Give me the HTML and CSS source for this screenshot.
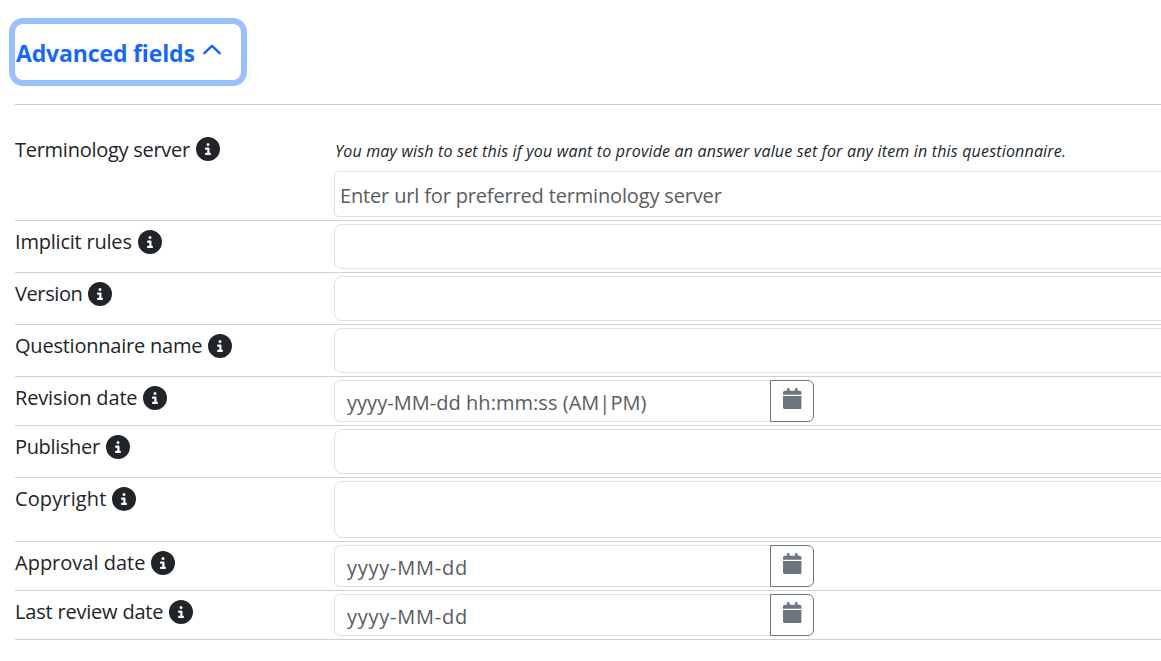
FILE: index.html
```
<!DOCTYPE html>
<html lang="en">
<head>
<meta charset="utf-8">
<title>Advanced fields</title>
<link rel="stylesheet" href="styles.css">
</head>
<body>
<svg width="0" height="0" class="defs">
  <symbol id="info" viewBox="0 0 512 512"><path d="M256 512A256 256 0 1 0 256 0a256 256 0 1 0 0 512zM216 336h24V272H216c-13.3 0-24-10.7-24-24s10.7-24 24-24h48c13.3 0 24 10.7 24 24v88h8c13.3 0 24 10.7 24 24s-10.7 24-24 24H216c-13.3 0-24-10.7-24-24s10.7-24 24-24zm40-208a32 32 0 1 1 0 64 32 32 0 1 1 0-64z"/></symbol>
  <symbol id="calendar" viewBox="0 0 448 512"><path d="M96 32V64H48C21.5 64 0 85.5 0 112v48H448V112c0-26.5-21.5-48-48-48H352V32c0-17.7-14.3-32-32-32s-32 14.3-32 32V64H160V32c0-17.7-14.3-32-32-32S96 14.3 96 32zM448 192H0V464c0 26.5 21.5 48 48 48H400c26.5 0 48-21.5 48-48V192z"/></symbol>
</svg>
<main class="panel">
  <button class="toggle"><span class="toggle-text">Advanced fields</span><svg class="chevron" viewBox="0 0 20 12"><path d="M2.4 9.2 10 1.8l7.6 7.4"/></svg></button>
  <div class="rule"></div>
  <div class="row row-first">
    <div class="label"><span class="t-term">Terminology server</span><svg class="info"><use href="#info"/></svg></div>
    <div class="field">
      <div class="help">You may wish to set this if you want to provide an answer value set for any item in this questionnaire.</div>
      <div class="input input-url"><span class="t-url">Enter url for preferred terminology server</span></div>
    </div>
  </div>
  <div class="row"><div class="label"><span class="t-impl">Implicit rules</span><svg class="info"><use href="#info"/></svg></div><div class="field"><div class="input"></div></div></div>
  <div class="row"><div class="label"><span class="t-ver">Version</span><svg class="info"><use href="#info"/></svg></div><div class="field"><div class="input"></div></div></div>
  <div class="row"><div class="label"><span class="t-name">Questionnaire name</span><svg class="info"><use href="#info"/></svg></div><div class="field"><div class="input"></div></div></div>
  <div class="row"><div class="label"><span class="t-rev">Revision date</span><svg class="info"><use href="#info"/></svg></div><div class="field date"><div class="date-input"><span class="t-datetime">yyyy-MM-dd hh:mm:ss (AM|PM)</span></div><button class="date-button"><svg class="calendar"><use href="#calendar"/></svg></button></div></div>
  <div class="row"><div class="label"><span class="t-pub">Publisher</span><svg class="info"><use href="#info"/></svg></div><div class="field"><div class="input"></div></div></div>
  <div class="row"><div class="label"><span class="t-copy">Copyright</span><svg class="info"><use href="#info"/></svg></div><div class="field"><div class="input input-area"></div></div></div>
  <div class="row"><div class="label"><span class="t-app">Approval date</span><svg class="info"><use href="#info"/></svg></div><div class="field date"><div class="date-input"><span class="t-date">yyyy-MM-dd</span></div><button class="date-button"><svg class="calendar"><use href="#calendar"/></svg></button></div></div>
  <div class="row"><div class="label"><span class="t-last">Last review date</span><svg class="info"><use href="#info"/></svg></div><div class="field date"><div class="date-input"><span class="t-date">yyyy-MM-dd</span></div><button class="date-button"><svg class="calendar"><use href="#calendar"/></svg></button></div></div>
</main>
</body>
</html>
```
FILE: styles.css
```
* { box-sizing: border-box; }
body { margin: 0; background: #fff; color: #212529; font-family: "Open Sans", "Noto Sans", sans-serif; font-size: 20px; overflow: hidden; }
.defs { display: block; }
.panel { padding: 18px 0 0 15px; }
.toggle { display: flex; align-items: flex-start; width: 238px; height: 68px; margin: 0 0 0 -6px; padding: 13px 0 0 1px; border: 6px solid #9ac0fe; border-radius: 14px; background: #fff; color: #1769f5; font: bold 23px/32px "Open Sans", "Noto Sans", sans-serif; letter-spacing: -0.15px; white-space: nowrap; }
.toggle-text { width: 185.5px; text-align: left; }
.chevron { width: 20px; height: 12px; margin-top: 6.5px; flex: none; fill: none; stroke: currentColor; stroke-width: 2.5; stroke-linecap: round; stroke-linejoin: round; }
.rule { height: 1px; margin-top: 18px; background: #c8c9ca; }
.row { display: grid; grid-template-columns: 319px 1fr; padding: 3px 0; border-bottom: 1px solid #cfd1d3; }
.row-first { margin-top: 20px; }
.label { display: flex; gap: 6px; height: 36px; padding-top: 6px; line-height: 24px; white-space: nowrap; }
.row-first .label { padding-top: 9px; line-height: 26px; }
.info { width: 24px; height: 24px; flex: none; fill: #212529; }
.field { min-width: 0; margin-right: -20px; }
.help { height: 43px; padding: 11px 0 0 1px; font-size: 16px; line-height: 24px; letter-spacing: 0.18px; font-style: italic; white-space: nowrap; }
.input { height: 45px; border: 1px solid #dee2e6; border-radius: 8px; }
.input-url { height: 46px; padding: 12px 0 0 5px; border-radius: 5px; color: #595c5f; line-height: 24px; white-space: nowrap; }
.input-area { height: 57px; }
.date { display: flex; width: 480px; margin: 0; }
.date-input { width: 436px; height: 42px; padding: 10px 0 0 12px; border: 1px solid #dee2e6; border-right: 0; border-radius: 6px 0 0 6px; color: #595c5f; line-height: 24px; white-space: nowrap; }
.date-button { display: flex; width: 44px; height: 42px; padding: 7px 0 0 12px; border: 1px solid #6c757d; border-radius: 0 6px 6px 0; background: #fff; }
.calendar { width: 18.67px; height: 21.33px; fill: #6c757d; }

/* Text tracking */
.t-term { letter-spacing: -0.27px; }
.t-impl { letter-spacing: -0.21px; }
.t-ver { letter-spacing: -0.4px; }
.t-name { letter-spacing: -0.22px; }
.t-rev { letter-spacing: -0.15px; }
.t-pub { letter-spacing: -0.34px; }
.t-copy { letter-spacing: 0.12px; }
.t-app { letter-spacing: 0; }
.t-last { letter-spacing: -0.2px; }
.t-url { letter-spacing: -0.16px; }
.t-datetime { letter-spacing: 0.04px; }
.t-date { letter-spacing: 0.75px; }
```
